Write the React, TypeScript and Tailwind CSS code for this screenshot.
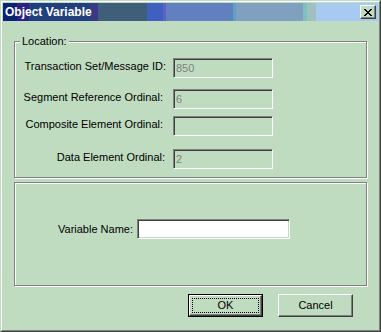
import React from "react";

const titleBands =
  "bg-[linear-gradient(to_right,#0B2174_0px,#0B2174_14px,#2B2287_14px,#2B2287_26px,#21407E_26px,#21407E_87px,#3A3887_87px,#3A3887_95px,#3E5E7A_95px,#3E5E7A_144px,#4060C0_144px,#4060C0_160px,#6060C8_160px,#6060C8_163px,#6080C0_163px,#6080C0_230px,#60A0C0_230px,#60A0C0_233px,#80A0C0_233px,#80A0C0_300px,#80C0C0_300px,#80C0C0_304px,#A0C0C0_304px,#A0C0C0_313px,#A6CAF0_313px,#A6CAF0_100%)]";

const sunken =
  "border border-t-[#808080] border-l-[#808080] border-b-white border-r-white shadow-[inset_1px_1px_0_#404040,inset_-1px_-1px_0_#C0DCC0]";

const etched = "border border-[#808080] shadow-[1px_1px_0_#fff,inset_1px_1px_0_#fff]";

interface FieldRowProps {
  label: string;
  value: string;
  gap: string;
  top: string;
}

const FieldRow = ({ label, value, gap, top }: FieldRowProps) => {
  return (
    <div className={`flex items-center h-[20px] ${top}`}>
      <div className={`w-[158px] text-right mb-[4px] ${gap}`}>{label}</div>
      <div className={`w-[100px] h-[20px] bg-[#C0DCC0] text-[#808080] pl-[2px] flex items-center ${sunken}`}>
        {value}
      </div>
    </div>
  );
};

const Button = ({ label, isDefault }: { label: string; isDefault?: boolean }) => {
  if (isDefault) {
    return (
      <div className="w-[75px] h-[23px] border border-black">
        <div className="h-full border border-t-white border-l-white border-r-[#404040] border-b-[#404040] shadow-[inset_-1px_-1px_0_#808080] p-[2px]">
          <div className="h-full border border-dotted border-black flex items-center justify-center">
            {label}
          </div>
        </div>
      </div>
    );
  }
  return (
    <div className="w-[75px] h-[23px] border border-t-white border-l-white border-r-[#404040] border-b-[#404040] shadow-[inset_-1px_-1px_0_#808080] flex items-center justify-center">
      {label}
    </div>
  );
};

export default function App() {
  return (
    <div className="w-[381px] h-[332px] bg-[#C0DCC0] border border-t-[#C0DCC0] border-l-[#C0DCC0] border-r-[#404040] border-b-[#404040] font-['Liberation_Sans',Arial,sans-serif] text-[11px] text-black leading-none">
      <div className="h-full border border-t-white border-l-white border-r-[#808080] border-b-[#808080] p-px flex flex-col">
        <div className={`h-[18px] flex items-center justify-between pl-[2px] pr-[2px] ${titleBands}`}>
          <span className="text-white font-bold text-[12px]">Object Variable</span>
          <div className="w-[16px] h-[14px] bg-[#C0DCC0] border border-t-white border-l-white border-r-[#404040] border-b-[#404040] shadow-[inset_-1px_-1px_0_#808080] flex items-center justify-center">
            <svg width="8" height="7" viewBox="0 0 8 7" shapeRendering="crispEdges">
              <path
                d="M0 0h2v1H0zM6 0h2v1H6zM1 1h2v1H1zM5 1h2v1H5zM2 2h4v1H2zM3 3h2v1H3zM2 4h4v1H2zM1 5h2v1H1zM5 5h2v1H5zM0 6h2v1H0zM6 6h2v1H6z"
                fill="#000"
              />
            </svg>
          </div>
        </div>

        <div className={`relative ml-[11px] mt-[20px] w-[353px] h-[137px] pt-[16px] ${etched}`}>
          <span className="absolute left-[5px] top-[-6px] bg-[#C0DCC0] px-[2px]">Location:</span>
          <FieldRow label="Transaction Set/Message ID:" value="850" gap="pr-[7px]" top="" />
          <FieldRow label="Segment Reference Ordinal:" value="6" gap="pr-[10px]" top="mt-[11px]" />
          <FieldRow label="Composite Element Ordinal:" value="" gap="pr-[10px]" top="mt-[7px]" />
          <FieldRow label="Data Element Ordinal:" value="2" gap="pr-[8px]" top="mt-[13px]" />
        </div>

        <div className={`ml-[11px] mt-[4px] w-[353px] h-[104px] pt-[36px] ${etched}`}>
          <div className="flex items-center h-[20px]">
            <div className="w-[122px] text-right pr-[4px]">Variable Name:</div>
            <div className={`w-[153px] h-[20px] bg-white ${sunken}`} />
          </div>
        </div>

        <div className="flex mt-[8px] ml-[185px] gap-[15px]">
          <Button label="OK" isDefault />
          <Button label="Cancel" />
        </div>
      </div>
    </div>
  );
}
